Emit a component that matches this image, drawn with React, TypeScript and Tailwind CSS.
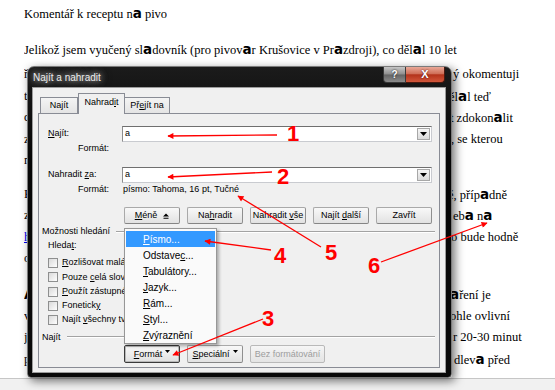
import React from "react";

const A = ({ children = "a" }: { children?: React.ReactNode }) => (
  <span className="font-['DejaVu_Sans',sans-serif] text-[13.5px] font-bold">{children}</span>
);

function Mn({ t, i }: { t: string; i: number }) {
  return (
    <span className="whitespace-pre">
      {t.slice(0, i)}
      <span className="underline underline-offset-[1px]">{t[i]}</span>
      {t.slice(i + 1)}
    </span>
  );
}

function Ln({ w, h, left, right }: { w?: string; h?: string; left: React.ReactNode; right?: React.ReactNode }) {
  return (
    <div className={`flex ${h ?? "h-[21.5px]"} whitespace-nowrap`}>
      <span className={`${w ?? ""} shrink-0 overflow-hidden`}>{left}</span>
      {right && <span>{right}</span>}
    </div>
  );
}

function Doc() {
  return (
    <div className="flex-1 overflow-hidden pl-[24px] pt-[3px] font-['Liberation_Serif',serif] text-[12.5px] leading-[21.5px] text-black">
      <div className="mb-[14px]">
        <Ln left={<>Komentář k receptu n<A /> pivo</>} />
      </div>
      <div className="mb-[12px]">
        <Ln
          h="h-[25.5px]"
          left={
            <>
              Jelikož jsem vyučený sl<A />dovník (pro pivov<A />r Krušovice v Pr<A />zdroji), co děl<A />l 10 let
            </>
          }
        />
        <Ln w="w-[429px]" left="řekl jsem si, že vám tento recept jako zkušen" right="ý okomentuji" />
        <Ln w="w-[425px]" left="tím, co jsem se v pivovaru naučil a co jsem tam d" right={<>ěl<A />l teď</>} />
        <Ln w="w-[426px]" left="doma, a tak jsem se ho rozhodl ještě trochu zkusi" right={<>t zdokon<A />lit</>} />
        <Ln w="w-[427px]" left="z ingrediencí, které se dají sehnat v každé obchodní síti" right=", se kterou" />
        <Ln left="nemá nikdo problém." />
      </div>
      <div className="mb-[14.5px]">
        <Ln w="w-[424px]" left="Kdo chce, může si tento recept uvařit sám doma, nebo společn" right={<>ě, příp<A />dně</>} />
        <Ln w="w-[429px]" left="zajít k nám do pivovaru a ochutnat naše pivo, ale to není tř" right={<>eb<A /> n<A /></>} />
        <Ln
          w="w-[427px]"
          left={
            <>
              <span className="text-[#0000ee] underline">http://www.krusovice.cz</span> a když to vyjde, tak t
            </>
          }
          right="o bude hodně"
        />
        <Ln left="ochutnávka zdarma." />
      </div>
      <div>
        <Ln w="w-[426px]" left={<><A>A</A> teď už k samotnému postupu. Nejdůležitější částí v</>} right={<><A />ření je</>} />
        <Ln w="w-[426px]" left="volba sladu a chmele, protože právě t" right="ohle ovlivní" />
        <Ln w="w-[429px]" left="jeho výslednou chuť. Rmut se poté zahřívá zhruba po dobu" right="r 20-30 minut" />
        <Ln w="w-[430px]" left="pak se přidá chmel a vše se vaří, mladina se o" right={<>dlev<A /> před</>} />
      </div>
    </div>
  );
}

function Field() {
  return (
    <div className="flex h-[16px] w-[310px] items-center border border-[#c9cbd0] border-l-[#8d8d8d] border-t-[#6f6f6f] bg-white">
      <span className="flex-1 pl-[2px]">a</span>
      <div className="mr-px flex h-[12px] w-[13px] items-center justify-center border border-[#a7a7a7] bg-[linear-gradient(#f6f6f6,#dadada)]">
        <svg width="7" height="4" viewBox="0 0 7 4">
          <path d="M0 0h7L3.5 4z" fill="#000" />
        </svg>
      </div>
    </div>
  );
}

const btn =
  "flex h-[17px] w-[56px] items-center justify-center rounded-[2px] border border-[#a9a9a9] border-b-[#858585] border-r-[#8f8f8f] bg-[linear-gradient(#f8f8f8,#ededed_50%,#e2e2e2)]";

function Caret() {
  return (
    <svg width="5" height="3" viewBox="0 0 5 3" className="ml-[3px] mb-[5px]">
      <path d="M0 0h5L2.5 3z" fill="#000" />
    </svg>
  );
}

function Check({ label }: { label: React.ReactNode }) {
  return (
    <div className="flex h-[14.25px] items-center gap-[4px] pl-[9px] whitespace-nowrap">
      <div className="size-[10px] border border-[#8e8f8f] bg-[linear-gradient(135deg,#d9d9d9,#fefefe)]" />
      {label}
    </div>
  );
}

function Group({ label }: { label: string }) {
  return (
    <div className="flex h-[12px] items-center gap-[6px] pl-[3px] pr-[4px]">
      <span>{label}</span>
      <div className="h-[2px] flex-1 border-t border-b border-t-[#a3a3a3] border-b-white" />
    </div>
  );
}

function Dialog() {
  return (
    <div className="absolute left-[27px] top-[66px] flex h-[312px] w-[425px] flex-col rounded-t-[7px] rounded-b-[4px] border border-[#7b7b7b] bg-[linear-gradient(180deg,#1b1b1b,#050505_30%,#0a0a0a)] shadow-[3px_3px_10px_rgba(0,0,0,0.55)] font-['Liberation_Sans',Arial,sans-serif] text-[9px] text-black">
      <div className="flex h-[21px] justify-between">
        <span className="self-center pl-[5px] font-['Liberation_Sans',Arial,sans-serif] text-[10px] text-[#ececec] [text-shadow:0_0_5px_#8f8f8f,0_0_9px_#8f8f8f,0_0_12px_#6f6f6f]">
          Najít a nahradit
        </span>
        <div className="flex h-[16px] pr-[6px]">
          <div className="flex w-[23px] items-center justify-center rounded-bl-[4px] border border-t-0 border-[#3a3a3a] bg-[linear-gradient(#c6c6c6,#8e8e8e_48%,#646464_52%,#8c8c8c)] text-[10px] font-bold text-white [text-shadow:0_0_2px_#000]">
            ?
          </div>
          <div className="flex w-[39px] items-center justify-center rounded-br-[4px] border border-l-0 border-t-0 border-[#4a1a10] bg-[linear-gradient(#e9a898,#cf6f58_45%,#b3331b_52%,#d2573b)] text-[11px] font-bold text-white [text-shadow:0_0_2px_#400]">
            X
          </div>
        </div>
      </div>
      <div className="mx-[5px] mb-[5px] mr-[6px] flex flex-1 flex-col bg-[#f0f0f0] px-[5px] pb-[4px] pt-[5px] shadow-[0_0_0_1px_#9c9c9c]">
        <div className="flex h-[20px] items-end pl-[2px]">
          <div className="flex h-[16px] w-[38px] items-center justify-center border border-b-0 border-[#898c95] bg-[linear-gradient(#f4f4f4,#e4e4e4)]">
            <Mn t="Najít" i={2} />
          </div>
          <div className="relative z-10 -mb-px flex h-[21px] w-[47px] items-center justify-center border border-b-0 border-[#898c95] bg-[#f0f0f0] pb-[2px]">
            <Mn t="Nahradit" i={6} />
          </div>
          <div className="flex h-[16px] w-[45px] items-center justify-center border border-b-0 border-l-0 border-[#898c95] bg-[linear-gradient(#f4f4f4,#e4e4e4)]">
            <Mn t="Přejít na" i={2} />
          </div>
        </div>
        <div className="flex flex-1 flex-col border border-[#898c95] bg-[#f0f0f0]">
          <div className="flex items-center pl-[9px] pt-[12px]">
            <span className="w-[74px]">
              <Mn t="Najít:" i={0} />
            </span>
            <Field />
          </div>
          <div className="mt-px flex h-[12px] items-center pl-[39px]">
            <span className="w-[45px]">Formát:</span>
          </div>
          <div className="mt-[12px] flex items-center pl-[9px]">
            <span className="w-[74px]">
              <Mn t="Nahradit za:" i={9} />
            </span>
            <Field />
          </div>
          <div className="mt-px flex h-[12px] items-center pl-[39px]">
            <span className="w-[45px]">Formát:</span>
            <span>písmo: Tahoma, 16 pt, Tučné</span>
          </div>
          <div className="mt-[11px] flex gap-[7px] pl-[85px]">
            <div className={btn}>
              <Mn t="Méně" i={0} />
              <svg width="6" height="6" viewBox="0 0 6 6" className="ml-[6px]">
                <path d="M0 3.6L3 0.4L6 3.6z M0.5 4.8h5v1h-5z" fill="#000" />
              </svg>
            </div>
            <div className={btn}>
              <Mn t="Nahradit" i={2} />
            </div>
            <div className={btn}>
              <Mn t="Nahradit vše" i={9} />
            </div>
            <div className={btn}>
              <Mn t="Najít další" i={6} />
            </div>
            <div className={btn}>Zavřít</div>
          </div>
          <div className="mt-[2px]">
            <Group label="Možnosti hledání" />
          </div>
          <div className="mt-[2px] flex h-[12px] items-center pl-[9px]">
            <Mn t="Hledat:" i={5} />
          </div>
          <div className="mt-[4px]">
            <Check label={<Mn t="Rozlišovat malá a velká písmena" i={0} />} />
            <Check label={<Mn t="Pouze celá slova" i={6} />} />
            <Check label={<Mn t="Použít zástupné znaky" i={0} />} />
            <Check label={<Mn t="Foneticky" i={8} />} />
            <Check label={<Mn t="Najít všechny tvary slov" i={6} />} />
          </div>
          <div className="mt-[4px]">
            <Group label="Najít" />
          </div>
          <div className="mt-[2px] flex gap-[7px] pl-[85px]">
            <div className="flex h-[18px] w-[56px] items-center justify-center rounded-[2px] border border-[#3b3b3b] bg-[linear-gradient(#f8f8f8,#ededed_50%,#e0e0e0)] shadow-[inset_0_0_0_1px_#b9b9b9]">
              <Mn t="Formát" i={0} />
              <Caret />
            </div>
            <div className="flex h-[18px] w-[56px] items-center justify-center rounded-[2px] border border-[#a9a9a9] border-b-[#858585] border-r-[#8f8f8f] bg-[linear-gradient(#f8f8f8,#ededed_50%,#e2e2e2)]">
              <Mn t="Speciální" i={0} />
              <Caret />
            </div>
            <div className="flex h-[18px] w-[75px] items-center justify-center rounded-[2px] border border-[#b9b9b9] bg-[linear-gradient(#f6f6f6,#ececec_50%,#e4e4e4)] text-[#9d9d9d]">
              Bez formátování
            </div>
          </div>
        </div>
      </div>
    </div>
  );
}

function Menu() {
  const items: [string, number][] = [
    ["Písmo...", 0],
    ["Odstavec...", 7],
    ["Tabulátory...", 0],
    ["Jazyk...", 0],
    ["Rám...", 0],
    ["Styl...", 0],
    ["Zvýraznění", 0],
  ];
  return (
    <div className="absolute left-[124px] top-[228px] h-[116px] w-[93px] border border-[#979797] bg-[#fafafa] px-px pt-[2px] font-['Liberation_Sans',Arial,sans-serif] text-[10px] text-black shadow-[2px_2px_3px_rgba(0,0,0,0.3)]">
      {items.map(([t, i], k) => (
        <div
          key={t}
          className={
            k === 0
              ? "flex h-[16px] items-center bg-[#3399ff] pl-[17px] text-white"
              : "flex h-[16px] items-center pl-[17px]"
          }
        >
          <Mn t={t} i={i} />
        </div>
      ))}
    </div>
  );
}

function Arrows() {
  const lines = [
    [277, 135, 168, 136],
    [272, 172, 168, 177],
    [263, 319, 173, 355],
    [271, 250, 205, 241],
    [321, 247, 238, 196],
    [381, 262, 487, 223],
  ];
  const nums: [string, number, number][] = [
    ["1", 293, 141],
    ["2", 283, 184],
    ["3", 268, 326],
    ["4", 280, 263],
    ["5", 331, 260],
    ["6", 374, 273],
  ];
  return (
    <svg className="pointer-events-none absolute left-0 top-0" width="555" height="390" viewBox="0 0 555 390">
      <defs>
        <marker id="ah" viewBox="0 0 10 10" refX="9" refY="5" markerWidth="8" markerHeight="6" markerUnits="userSpaceOnUse" orient="auto">
          <path d="M0 0L10 5L0 10z" fill="#f00" />
        </marker>
      </defs>
      {lines.map(([x1, y1, x2, y2], k) => (
        <line key={k} x1={x1} y1={y1} x2={x2} y2={y2} stroke="#f00" strokeWidth="1.3" markerEnd="url(#ah)" />
      ))}
      {nums.map(([n, x, y]) => (
        <text key={n} x={x} y={y} fill="#f00" fontFamily="Liberation Sans, Arial, sans-serif" fontWeight="700" fontSize="22" textAnchor="middle">
          {n}
        </text>
      ))}
    </svg>
  );
}

export default function App() {
  return (
    <div className="relative h-[390px] w-[555px] overflow-hidden bg-white">
      <div className="flex h-full flex-col">
        <Doc />
        <div className="h-[12px] border-t border-[#c6c6c6] bg-[#f1f1f1]" />
      </div>
      <Dialog />
      <Menu />
      <Arrows />
    </div>
  );
}
